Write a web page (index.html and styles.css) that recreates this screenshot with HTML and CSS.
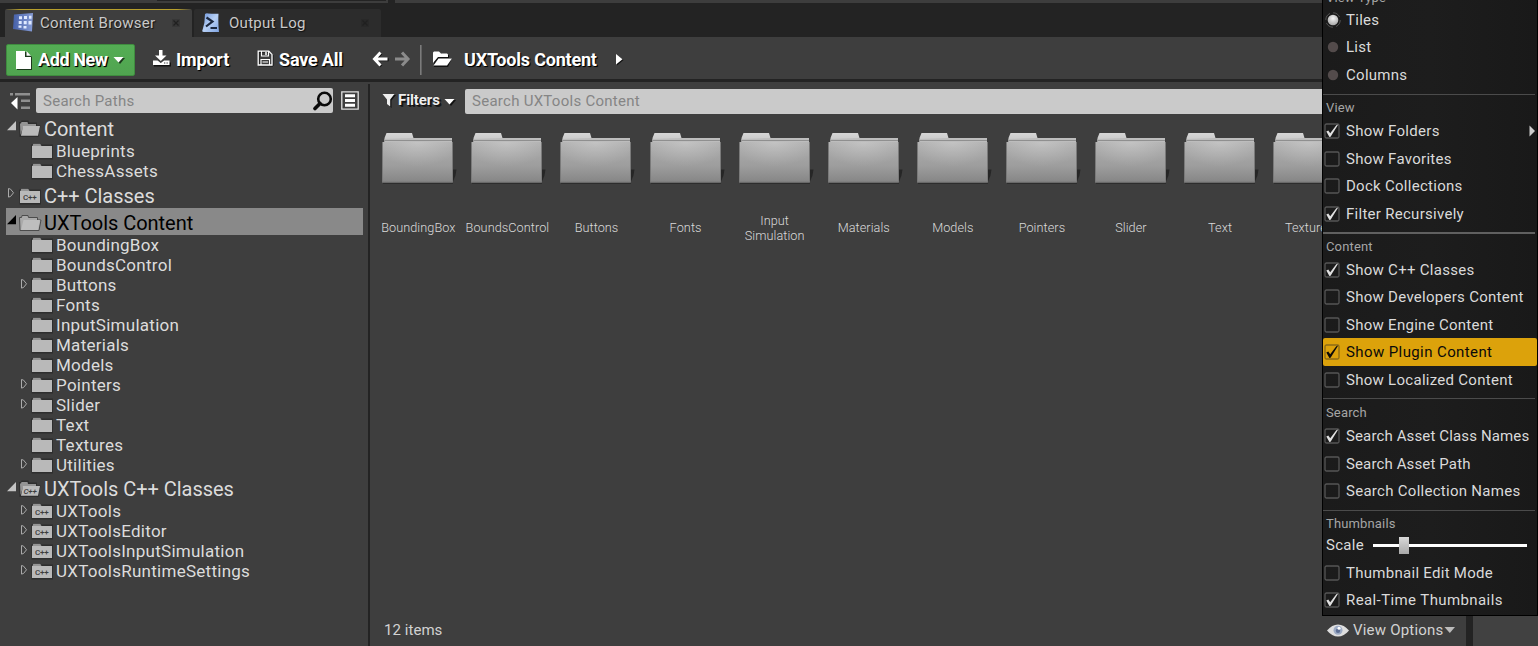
FILE: index.html
```html
<!DOCTYPE html>
<html lang="en">
<head>
<meta charset="utf-8">
<title>Content Browser</title>
<link rel="stylesheet" href="styles.css">
</head>
<body>
<svg class="defs" width="0" height="0">
  <defs>
    <linearGradient id="gFolder" x1="0" y1="0" x2="0" y2="1"><stop offset="0" stop-color="#b0b0b0"/><stop offset=".15" stop-color="#aaa"/><stop offset=".6" stop-color="#9d9d9d"/><stop offset="1" stop-color="#858585"/></linearGradient>
    <radialGradient id="gGlow" cx=".5" cy="0" r=".6"><stop offset="0" stop-color="#fff" stop-opacity=".25"/><stop offset="1" stop-color="#fff" stop-opacity="0"/></radialGradient>
    <linearGradient id="gTab" x1="0" y1="0" x2="0" y2="1"><stop offset="0" stop-color="#d6d6d6"/><stop offset="1" stop-color="#c2c2c2"/></linearGradient>
    <linearGradient id="gBlue" x1="0" y1="0" x2="1" y2="0"><stop offset="0" stop-color="#4560a8"/><stop offset="1" stop-color="#869cd6"/></linearGradient>
    <linearGradient id="gLog" x1="0" y1="0" x2="1" y2="1"><stop offset="0" stop-color="#6e96dc"/><stop offset=".5" stop-color="#b7d0f5"/><stop offset="1" stop-color="#7fa4e2"/></linearGradient>
    <radialGradient id="gRadio" cx=".5" cy=".35" r=".65"><stop offset="0" stop-color="#f4f4f4"/><stop offset="1" stop-color="#a8a8a8"/></radialGradient>
    <symbol id="tile" viewBox="0 0 78 52">
      <path d="M72 37.500h3.500l-1 6-2.500 6z" fill="#262626"/>
      <path d="M2 50.500h70v1H2z" fill="#1c1c1c"/>
      <path d="M3.500 6L5.500 1h25.500l1.500 5h38.500v6h-67.500z" fill="url(#gTab)"/>
      <path d="M32 6h39v4H3.500V7z" fill="#bdbdbd"/>
      <path d="M3.500 8.500h67.500" stroke="#8f8f8f"/>
      <path d="M1 10h71v40.500H1z" fill="url(#gFolder)"/>
      <path d="M1 10h71v40.500H1z" fill="url(#gGlow)"/>
      <path d="M1.500 10v40h70V10" fill="none" stroke="#7a7a7a"/>
    </symbol>
    <symbol id="folder" viewBox="0 0 24 20">
      <path d="M1 3.500h2l.5-1.500h7l.5 1.500h12v15H1.500z" fill="#262626" opacity=".65"/>
      <path d="M2.500 5l.8-2.200h7L11.500 5z" fill="#959595"/>
      <path d="M2 5h20v12H2z" fill="#b9b9b9"/>
    </symbol>
    <symbol id="open" viewBox="0 0 24 20">
      <path d="M1 3h2l.5-1.500h7L11 3.500h8v3h3.500l-2 11.500H1.500z" fill="#262626" opacity=".7"/>
      <path d="M2 4.500h1l.5-1.500H9.500l.5 2h8v3H5L2.500 16z" fill="#949494"/>
      <path d="M5 7h17l-2 9.800H3z" fill="#bababa"/>
    </symbol>
    <symbol id="opensel" viewBox="0 0 24 20">
      <path d="M1.500 4.500h2l.5-2h6l.5 2h9V7h3.500l-2 10.500H2z" fill="#aaa" stroke="#4c4c4c"/>
      <path d="M5.500 7H22l-2 10H3z" fill="#bebebe"/>
    </symbol>
    <symbol id="cpp" viewBox="0 0 24 20">
      <use href="#folder"/>
      <text x="5" y="13.800" class="cppText">C++</text>
    </symbol>
    <symbol id="cppopen" viewBox="0 0 24 20">
      <use href="#open"/>
      <text x="5.500" y="14.500" class="cppText" font-style="italic">C++</text>
    </symbol>
    <symbol id="closed" viewBox="0 0 10 12"><path d="M2.500 1.500v8.600l2-.6 3-3.700-3-3.700z" fill="none" stroke="#aaa"/></symbol>
    <symbol id="expanded" viewBox="0 0 10 12"><path d="M10 1v9.300H1z" fill="currentColor"/></symbol>
    <symbol id="box" viewBox="0 0 16 16"><rect x="1" y="1" width="14" height="14" rx="1.500" fill="none" stroke="currentColor" stroke-width="1.300"/></symbol>
    <symbol id="check" viewBox="0 0 16 16"><path d="M2.300 8.600l2-1 1.900 2.600L12.300 2.300l1.900-.7L6.600 13.800l-1.200.2z" fill="currentColor"/></symbol>
    <symbol id="x" viewBox="0 0 10 10"><path d="M2.500 2.500l5 5M7.500 2.500l-5 5" stroke="#222" stroke-width="1.300"/><path d="M1 1h8v8H1z" fill="#171717" opacity=".2"/></symbol>
  </defs>
</svg>

<div class="topstrip"><i class="s1"></i><i class="s2"></i></div>
<header class="tabs">
  <div class="tab active">
    <svg width="22" height="20" viewBox="0 0 22 20"><path d="M1 1.500L20 0l-1 18.500L0 16z" fill="url(#gBlue)"/><g fill="#dfe9ff"><path d="M6 3.200h3v3H6zM11 3h3v3h-3zM16 2.800h2.500v3H16zM5.700 8h3v3h-3zM10.700 8h3v3.200h-3zM15.500 8h3v3.500h-3zM5.500 12.500h3v2.300h-3zM10.500 13h3v2.500h-3z"/></g></svg>
    <span>Content Browser</span>
    <svg class="close" width="10" height="10"><use href="#x"/></svg>
  </div>
  <div class="tab log">
    <svg width="18" height="20" viewBox="0 0 18 20"><path d="M3 1q1.500-1 3-.5 5 .5 10.500.3Q16 10 17 19H2Q-.5 19 .5 17 3 10 3 1z" fill="url(#gLog)"/><path d="M4.500 4.500l6 4-6.500 5" fill="none" stroke="#1c2940" stroke-width="2.200"/><path d="M8.500 15h6.500" stroke="#1c2940" stroke-width="2"/></svg>
    <span>Output Log</span>
    <svg class="close" width="10" height="10"><use href="#x"/></svg>
  </div>
</header>

<nav class="toolbar">
  <div class="addnew">
    <svg width="18" height="20" viewBox="0 0 18 20"><path d="M2 2h10l5 5v13H2z" fill="#1c381c"/><path d="M1 1h9v6h6v12H1z" fill="#fff"/><path d="M11.500 1L16 5.700h-4.500z" fill="#fff"/></svg>
    <span>Add New</span>
    <svg width="12" height="8" viewBox="0 0 12 8"><path d="M2 2h10L7 8z" fill="#1c381c"/><path d="M.5 1h10l-5 5.500z" fill="#fff"/></svg>
  </div>
  <div class="tool import">
    <svg width="19" height="18" viewBox="0 0 19 18"><path d="M2 13.500h17v4H2z" fill="#111"/><path d="M7 1h3.500v5.500h4L8.800 12 3 6.500h4zM1 11.500h4.500l3.300 2.500 3.300-2.500H17.500V16H1z" fill="#fff"/><path d="M12 14h1.300M14.500 14h1.300" stroke="#333"/></svg>
    <span>Import</span>
  </div>
  <div class="tool save">
    <svg width="17" height="17" viewBox="0 0 17 17"><path d="M2 2h11l3 3v11H2z" fill="none" stroke="#111"/><path d="M1.200 1.200h10.600l3.200 3.200v10.600H1.200z" fill="none" stroke="#fff" stroke-width="1.300"/><path d="M4.500 1v5h7V1M4 15V9.500h8.500V15M5.500 12h5.500" fill="none" stroke="#fff" stroke-width="1.100"/><path d="M9 2v3" stroke="#fff" stroke-width="1.500"/></svg>
    <span>Save All</span>
  </div>
  <svg class="back" width="17" height="18" viewBox="0 0 17 18"><path d="M8.500 2.500L2.500 9l6 6.500M3 9h13" fill="none" stroke="#111" stroke-width="3" transform="translate(.7 .8)"/><path d="M8.500 2.500L2.500 9l6 6.500M3 9h12.500" fill="none" stroke="#fff" stroke-width="3"/></svg>
  <svg class="fwd" width="17" height="18" viewBox="0 0 17 18"><path d="M8 2.500L14 9l-6 6.500M13.500 9H1" fill="none" stroke="#8b8b8b" stroke-width="3"/></svg>
  <i class="vline"></i>
  <svg class="crumbicon" width="21" height="18" viewBox="0 0 21 18"><path d="M2 3h7l2 2h6v3h3l-4 9H2z" fill="#111"/><path d="M1 13V2.500L2 1.500h5l2 2h6l1 1V7H6z" fill="#fff"/><path d="M6.500 8.500H20L15 15.500H1.500z" fill="#fff"/></svg>
  <span class="crumb">UXTools Content</span>
  <svg class="arrow" width="9" height="13" viewBox="0 0 9 13"><path d="M2 2l6.500 5L2 12.500z" fill="#111"/><path d="M1 1l6.500 5.300L1 11.500z" fill="#fff"/></svg>
</nav>

<main class="main">
  <aside class="side">
    <div class="pathbar">
      <svg width="22" height="18" viewBox="0 0 22 18"><path d="M0 1h3v2.500H0zM5 1h15v2.500H5zM11 7.500h9V10h-9zM11 14.500h9V17h-9z" fill="#8f8f8f"/><path d="M7.500 5v12.500L1 11z" fill="#fff"/></svg>
      <div class="search"><span>Search Paths</span>
        <svg width="20" height="20" viewBox="0 0 20 20"><circle cx="11.500" cy="8" r="6.300" fill="none" stroke="#0a0a0a" stroke-width="2.600"/><path d="M7 12.500L2 17.500" stroke="#0a0a0a" stroke-width="3.600" stroke-linecap="round"/></svg>
      </div>
      <svg class="listbtn" width="18" height="19" viewBox="0 0 18 19"><path d="M.8.800h16.400v17.400H.8z" fill="none" stroke="#e0e0e0" stroke-width="1.300"/><path d="M4 3.300h10v3H4zM4 8h10v3H4zM4 12.800h10v3H4z" fill="#fff"/></svg>
    </div>
    <div class="tree">
      <div class="root"><svg class="ex"><use href="#expanded"/></svg><svg class="ic"><use href="#open"/></svg><span>Content</span></div>
      <div class="leaf"><svg class="ex"></svg><svg class="ic"><use href="#folder"/></svg><span>Blueprints</span></div>
      <div class="leaf"><svg class="ex"></svg><svg class="ic"><use href="#folder"/></svg><span>ChessAssets</span></div>
      <div class="root"><svg class="ex"><use href="#closed"/></svg><svg class="ic"><use href="#cpp"/></svg><span>C++ Classes</span></div>
      <div class="root selected"><svg class="ex"><use href="#expanded"/></svg><svg class="ic"><use href="#opensel"/></svg><span>UXTools Content</span></div>
      <div class="leaf"><svg class="ex"></svg><svg class="ic"><use href="#folder"/></svg><span>BoundingBox</span></div>
      <div class="leaf"><svg class="ex"></svg><svg class="ic"><use href="#folder"/></svg><span>BoundsControl</span></div>
      <div class="leaf"><svg class="ex"><use href="#closed"/></svg><svg class="ic"><use href="#folder"/></svg><span>Buttons</span></div>
      <div class="leaf"><svg class="ex"></svg><svg class="ic"><use href="#folder"/></svg><span>Fonts</span></div>
      <div class="leaf"><svg class="ex"></svg><svg class="ic"><use href="#folder"/></svg><span>InputSimulation</span></div>
      <div class="leaf"><svg class="ex"></svg><svg class="ic"><use href="#folder"/></svg><span>Materials</span></div>
      <div class="leaf"><svg class="ex"></svg><svg class="ic"><use href="#folder"/></svg><span>Models</span></div>
      <div class="leaf"><svg class="ex"><use href="#closed"/></svg><svg class="ic"><use href="#folder"/></svg><span>Pointers</span></div>
      <div class="leaf"><svg class="ex"><use href="#closed"/></svg><svg class="ic"><use href="#folder"/></svg><span>Slider</span></div>
      <div class="leaf"><svg class="ex"></svg><svg class="ic"><use href="#folder"/></svg><span>Text</span></div>
      <div class="leaf"><svg class="ex"></svg><svg class="ic"><use href="#folder"/></svg><span>Textures</span></div>
      <div class="leaf"><svg class="ex"><use href="#closed"/></svg><svg class="ic"><use href="#folder"/></svg><span>Utilities</span></div>
      <div class="root short"><svg class="ex"><use href="#expanded"/></svg><svg class="ic"><use href="#cppopen"/></svg><span>UXTools C++ Classes</span></div>
      <div class="leaf"><svg class="ex"><use href="#closed"/></svg><svg class="ic"><use href="#cpp"/></svg><span>UXTools</span></div>
      <div class="leaf"><svg class="ex"><use href="#closed"/></svg><svg class="ic"><use href="#cpp"/></svg><span>UXToolsEditor</span></div>
      <div class="leaf"><svg class="ex"><use href="#closed"/></svg><svg class="ic"><use href="#cpp"/></svg><span>UXToolsInputSimulation</span></div>
      <div class="leaf"><svg class="ex"><use href="#closed"/></svg><svg class="ic"><use href="#cpp"/></svg><span>UXToolsRuntimeSettings</span></div>
    </div>
  </aside>

  <section class="content">
    <div class="filterbar">
      <svg width="14" height="15" viewBox="0 0 14 15"><path d="M2 2h12L9.500 7.500V15L6.500 12V7.500z" fill="#111"/><path d="M.5 1h12L8.200 6.500V13.500L5 11V6.500z" fill="#eee"/></svg>
      <b>Filters</b>
      <svg class="dd" width="12" height="8" viewBox="0 0 12 8"><path d="M2 2h10L7 8z" fill="#111"/><path d="M.5 1h10l-5 5.500z" fill="#fff"/></svg>
      <div class="search"><span>Search UXTools Content</span></div>
    </div>
    <div class="tiles">
      <div class="tile"><svg width="78" height="52"><use href="#tile"/></svg><p>BoundingBox</p></div>
      <div class="tile"><svg width="78" height="52"><use href="#tile"/></svg><p>BoundsControl</p></div>
      <div class="tile"><svg width="78" height="52"><use href="#tile"/></svg><p>Buttons</p></div>
      <div class="tile"><svg width="78" height="52"><use href="#tile"/></svg><p>Fonts</p></div>
      <div class="tile"><svg width="78" height="52"><use href="#tile"/></svg><p class="two">Input<br>Simulation</p></div>
      <div class="tile"><svg width="78" height="52"><use href="#tile"/></svg><p>Materials</p></div>
      <div class="tile"><svg width="78" height="52"><use href="#tile"/></svg><p>Models</p></div>
      <div class="tile"><svg width="78" height="52"><use href="#tile"/></svg><p>Pointers</p></div>
      <div class="tile"><svg width="78" height="52"><use href="#tile"/></svg><p>Slider</p></div>
      <div class="tile"><svg width="78" height="52"><use href="#tile"/></svg><p>Text</p></div>
      <div class="tile"><svg width="78" height="52"><use href="#tile"/></svg><p>Textures</p></div>
    </div>
    <footer class="status">
      <span class="count">12 items</span>
      <svg class="eye" width="22" height="14" viewBox="0 0 22 14"><path d="M0 7.500Q5 1.500 11 1.500T22 7.500Q17 13.500 11 13.500T0 7.500z" fill="#dedede"/><circle cx="11" cy="7.300" r="4.500" fill="#9dabc4"/><circle cx="11" cy="7.800" r="2.200" fill="#5d6f95"/><circle cx="12" cy="5.300" r="1.500" fill="#fff"/></svg>
      <span class="vo">View Options</span>
      <svg class="dd" width="12" height="8" viewBox="0 0 12 8"><path d="M.5 1h10.500L5.800 7z" fill="#bbb"/></svg>
      <i class="gap"></i><i class="rest"></i>
    </footer>
  </section>
</main>

<div class="menu">
  <div class="head first">View Type</div>
  <div class="row"><svg><circle cx="9" cy="8" r="7.200" fill="none" stroke="#555" stroke-dasharray="8 3.300"/><circle cx="9" cy="8" r="5.300" fill="url(#gRadio)"/></svg>Tiles</div>
  <div class="row"><svg><circle cx="9" cy="8" r="5.200" fill="#534b4b"/></svg>List</div>
  <div class="row"><svg><circle cx="9" cy="8" r="5.200" fill="#534b4b"/></svg>Columns</div>
  <div class="head">View</div>
  <div class="row"><svg class="bx"><use href="#box"/><use class="ck" href="#check"/></svg>Show Folders<svg class="sub" viewBox="0 0 7 12"><path d="M.5.500L6 6 .5 11.500z" fill="#ccc"/></svg></div>
  <div class="row"><svg class="bx"><use href="#box"/></svg>Show Favorites</div>
  <div class="row"><svg class="bx"><use href="#box"/></svg>Dock Collections</div>
  <div class="row"><svg class="bx"><use href="#box"/><use class="ck" href="#check"/></svg>Filter Recursively</div>
  <div class="head thick">Content</div>
  <div class="row"><svg class="bx"><use href="#box"/><use class="ck" href="#check"/></svg>Show C++ Classes</div>
  <div class="row"><svg class="bx"><use href="#box"/></svg>Show Developers Content</div>
  <div class="row"><svg class="bx"><use href="#box"/></svg>Show Engine Content</div>
  <div class="row hot"><svg class="bx"><use href="#box"/><use class="ck" href="#check"/></svg>Show Plugin Content</div>
  <div class="row"><svg class="bx"><use href="#box"/></svg>Show Localized Content</div>
  <div class="head low">Search</div>
  <div class="row tight"><svg class="bx"><use href="#box"/><use class="ck" href="#check"/></svg>Search Asset Class Names</div>
  <div class="row tight"><svg class="bx"><use href="#box"/></svg>Search Asset Path</div>
  <div class="row"><svg class="bx"><use href="#box"/></svg>Search Collection Names</div>
  <div class="head">Thumbnails</div>
  <div class="scale"><span>Scale</span><div class="track"><i></i></div></div>
  <div class="row"><svg class="bx"><use href="#box"/></svg>Thumbnail Edit Mode</div>
  <div class="row wide"><svg class="bx"><use href="#box"/><use class="ck" href="#check"/></svg>Real-Time Thumbnails</div>
</div>
</body>
</html>
```

FILE: styles.css
```css
* { box-sizing: border-box; }
html, body { margin: 0; height: 646px; overflow: hidden; }
body {
  position: relative;
  width: 1538px;
  display: flex;
  flex-direction: column;
  background: #3e3e3e;
  color: #dcdcdc;
  font-family: Roboto, "Liberation Sans", sans-serif;
  white-space: nowrap;
}
svg { display: block; flex: none; }
.defs { position: absolute; }
.cppText { font-family: Roboto, sans-serif; font-weight: 500; font-size: 8px; letter-spacing: -.2px; fill: #3c3c3c; }

.topstrip { height: 3px; background: #3d3d3d; display: flex; justify-content: flex-start; flex: none; }
.topstrip .s1 { width: 229px; margin-left: 157px; height: 1px; background: #242424; }
.topstrip .s2 { width: 7px; height: 3px; margin-left: 2px; background: #232323; }

.tabs { height: 34px; background: #232323; display: flex; gap: 2px; padding: 6px 0 0 5px; flex: none; }
.tab {
  width: 187px; height: 28px; background: #2c2c2c; display: flex; align-items: center;
  padding: 0 11px 0 8px; font-size: 15px; letter-spacing: .28px; color: #c9c9c9;
  text-shadow: 1px 1px 1px #111; border-radius: 2px 2px 0 0;
}
.tab.active { background: linear-gradient(90deg, transparent, #b79f2c 8%, #b79f2c 92%, transparent) top / 100% 1px no-repeat #3e3e3e; }
.tab span { margin-left: 5px; }
.tab .close { margin-left: auto; }
.tab.log span { margin-left: 9px; }

.toolbar {
  height: 45px; flex: none; display: flex; align-items: center; padding: 0 0 0 6px;
  border-bottom: 3px solid #232323; color: #fff; font-weight: 700; font-size: 18px; letter-spacing: -.2px;
  text-shadow: 1px 1px 1px #000, 1px 1px 0 #111;
}
.addnew {
  width: 129px; height: 32px; margin-top: 3px; background: linear-gradient(#54ad54, #50a450); border: 1px solid #3f8c3f;
  border-radius: 2px; display: flex; align-items: center; padding-left: 8px;
}
.addnew span { margin-left: 5px; width: 71px; letter-spacing: -.4px; }
.addnew svg:last-child { margin-left: 4px; }
.tool { display: flex; align-items: center; margin-top: 3px; }
.import { margin-left: 17px; width: 105px; }
.import span { margin-left: 5px; }
.import svg { margin-bottom: 3px; }
.save span { margin-left: 5px; }
.save svg { margin-bottom: 2px; }
.save { width: 115px; }
.back { margin-top: 2px; }
.fwd { margin: 2px 0 0 5px; }
.vline { width: 2px; height: 30px; margin: 4px 0 0 9px; background: linear-gradient(90deg, #888, #555); }
.crumbicon { margin: 1px 0 0 10px; }
.crumb { margin: 3px 0 0 11px; width: 134px; }
.arrow { margin: 3px 0 0 17px; }

.main { flex: 1; display: flex; min-height: 0; }
.side { width: 370px; border-right: 2px solid #232323; margin-top: 2px; }
.pathbar { height: 30px; display: flex; align-items: center; padding: 3px 0 0 10px; }
.search {
  background: #cacaca; border-radius: 2px; color: #858585; font-size: 15px; letter-spacing: .27px;
  display: flex; align-items: center; height: 25px; padding-left: 7px;
}
.side .search { width: 297px; margin-left: 4px; justify-content: space-between; }
.listbtn { margin-left: 8px; }

.tree { padding-left: 6px; width: 363px; }
.root, .leaf { display: flex; align-items: center; }
.root { height: 27px; font-size: 20px; letter-spacing: -.03px; }
.root.short { height: 26px; }
.leaf { height: 20px; font-size: 17px; letter-spacing: .27px; padding-left: 12px; }
.ex { width: 10px; height: 12px; margin-bottom: 2px; color: #c4c4c4; }
.leaf .ex { margin-left: 1px; }
.root .ex { margin-bottom: 3px; }
.ic { width: 24px; height: 20px; margin-left: 2px; }
.leaf .ic { margin-left: 1px; }
.root .ic { margin-top: 2px; }
.root span, .leaf span { margin-left: 2px; }
.root span { padding-top: 3px; }
.root.short span { padding-top: 2px; }
.selected { background: #898989; color: #000; }
.selected .ex { color: #000; }

.content { flex: 1; display: flex; flex-direction: column; min-width: 0; }
.filterbar { height: 38px; display: flex; align-items: center; padding-left: 12px; }
.filterbar svg, .filterbar b { margin-bottom: 2px; }
.filterbar b { margin-left: 2px; width: 43px; color: #eee; font-size: 15px; letter-spacing: -.1px; text-shadow: 1px 1px 0 #111, 2px 2px 0 #1a1a1a; }
.filterbar .dd { margin: 1px 0 0 3px; }
.filterbar .search { margin-left: 9px; flex: 1; }
.tiles { display: grid; grid-template-columns: repeat(11, 89.080px); padding: 12px 0 0 3.800px; flex: 1; }
.tile { display: flex; flex-direction: column; align-items: center; font-size: 12.700px; font-weight: 300; letter-spacing: .06px; line-height: 15px; color: #dadada; }
.tile svg { margin-left: 4px; }
.tile p { margin: 28px 0 0; height: 30px; display: flex; align-items: center; text-align: center; }
.tile .two { margin-top: 29px; }
.status { height: 32px; display: flex; align-items: center; padding-left: 14px; font-size: 15px; letter-spacing: .05px; color: #d2d2d2; }
.count { width: 943px; }
.vo { margin-left: 4px; width: 91px; letter-spacing: .2px; }
.gap { width: 7px; align-self: stretch; margin-left: 10px; background: #232323; }
.rest { flex: 1; align-self: stretch; background: #414141; }

.menu {
  position: absolute; left: 1322px; top: -23px; width: 216px; height: 639px;
  background: linear-gradient(90deg, #1b1b1b, #1d1d1d 50%, #191919); border: 1px solid #000;
  display: flex; flex-direction: column; font-size: 15px; letter-spacing: .28px; color: #dadada;
}
.row { height: 27.500px; flex: none; display: flex; align-items: center; position: relative; padding-left: 1px; }
.row svg { width: 16px; height: 16px; margin-right: 6px; color: #555; overflow: visible; }
.row .ck { color: #e0e0e0; }
.row .sub { width: 7px; height: 12px; margin: 0 1px 0 auto; }
.tight { letter-spacing: .13px; }
.wide, .hot { letter-spacing: .4px; }
.hot { background: #dca20b; color: #0a0a0a; border-radius: 2px; }
.hot svg { color: #8a6b18; }
.hot .ck { color: #0a0a0a; }
.head { height: 28.800px; flex: none; font-size: 13px; letter-spacing: .15px; color: #a5a5a5; line-height: 15px; padding: 11px 0 0 3px; background: linear-gradient(#4b4b4b, #4b4b4b) 0 5px / 212px 1px no-repeat; }
.head.thick { padding-top: 12px; height: 28.600px; background-image: linear-gradient(#606060, #606060); background-size: 212px 2px; }
.head.low { padding-top: 12px; }
.head.first { background: none; height: 28.100px; padding-top: 12px; }
.scale { height: 25.200px; flex: none; display: flex; align-items: center; padding: 0 0 2px 3px; }
.scale span { width: 47px; }
.track { width: 154px; height: 3px; background: #fff; display: flex; align-items: center; padding-left: 26px; }
.track i { width: 10px; height: 17px; flex: none; background: linear-gradient(#d8d8d8, #a8a8a8); }
```
